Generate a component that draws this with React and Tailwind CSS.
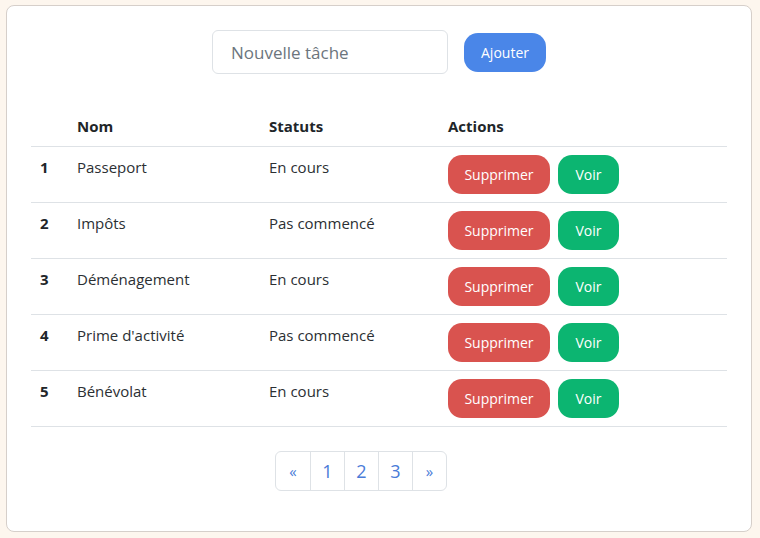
import React from 'react';

const taches = [
  { id: 1, nom: 'Passeport', statut: 'En cours' },
  { id: 2, nom: 'Impôts', statut: 'Pas commencé' },
  { id: 3, nom: 'Déménagement', statut: 'En cours' },
  { id: 4, nom: "Prime d'activité", statut: 'Pas commencé' },
  { id: 5, nom: 'Bénévolat', statut: 'En cours' },
];

export default function App() {
  return (
    <div className="min-h-screen bg-[#fdf6ee] pt-[5px] pl-[6px] font-['Open_Sans',sans-serif] text-[#212529]">
      <div className="w-[746px] rounded-lg border border-[#d6cfca] bg-white px-6 pt-6 pb-10">
        {/* formulaire d'ajout */}
        <div className="flex items-center justify-center gap-4">
          <input
            type="text"
            placeholder="Nouvelle tâche"
            className="h-[44px] w-[236px] rounded-md border border-[#dee2e6] px-[18px] text-[17px] placeholder:text-[#6c757d] outline-none"
          />
          <button className="h-[39px] w-[82px] rounded-[14px] bg-[#4a86e8] text-[14px] text-white">
            Ajouter
          </button>
        </div>

        <table className="mt-[32px] w-full border-collapse text-[15px]">
          <thead>
            <tr className="border-b border-[#dee2e6]">
              <th className="w-[38px] px-2 py-2 text-left leading-6"></th>
              <th className="w-[192px] px-2 py-2 text-left font-bold leading-6">Nom</th>
              <th className="w-[179px] px-2 py-2 text-left font-bold leading-6">Statuts</th>
              <th className="px-2 py-2 text-left font-bold leading-6">Actions</th>
            </tr>
          </thead>
          <tbody>
            {taches.map((t) => (
              <tr key={t.id} className="border-b border-[#dee2e6]">
                <td className="px-2 pl-[9px] py-2 align-top font-bold leading-6">{t.id}</td>
                <td className="px-2 py-2 align-top leading-6 text-[#2b2f33]">{t.nom}</td>
                <td className="px-2 py-2 align-top leading-6 text-[#2b2f33]">{t.statut}</td>
                <td className="px-2 py-2 align-top">
                  <div className="flex gap-2">
                    <button className="h-[39px] w-[102px] rounded-[14px] bg-[#d9534f] text-[14px] text-white">
                      Supprimer
                    </button>
                    <button className="h-[39px] w-[61px] rounded-[14px] bg-[#0cb571] text-[14px] text-white">
                      Voir
                    </button>
                  </div>
                </td>
              </tr>
            ))}
          </tbody>
        </table>

        {/* pagination */}
        <div className="mt-[24px] flex">
          <div className="ml-[244px] flex h-[40px] overflow-hidden rounded-md border border-[#dee2e6] text-[#4a7bd8]">
            <span className="flex w-[34px] items-center justify-center text-[15px]">«</span>
            <span className="flex w-[34px] items-center justify-center border-l border-[#dee2e6] text-[18px]">1</span>
            <span className="flex w-[34px] items-center justify-center border-l border-[#dee2e6] text-[18px]">2</span>
            <span className="flex w-[34px] items-center justify-center border-l border-[#dee2e6] text-[18px]">3</span>
            <span className="flex w-[34px] items-center justify-center border-l border-[#dee2e6] text-[15px]">»</span>
          </div>
        </div>
      </div>
    </div>
  );
}
